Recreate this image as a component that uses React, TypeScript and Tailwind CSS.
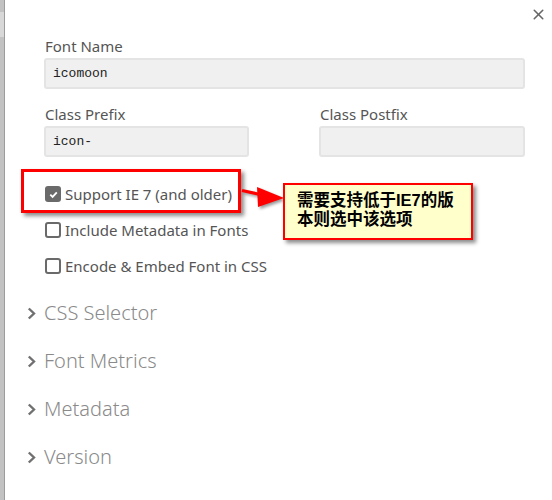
import { X } from "lucide-react";

const options = [
  { label: "Support IE 7 (and older)", checked: true },
  { label: "Include Metadata in Fonts", checked: false },
  { label: "Encode & Embed Font in CSS", checked: false },
];

const sections = ["CSS Selector", "Font Metrics", "Metadata", "Version"];

const Checkbox = ({ checked }: { checked: boolean }) =>
  checked ? (
    <span className="flex h-4 w-4 items-center justify-center rounded-[3px] bg-[#6a6a6a]">
      <svg viewBox="0 0 12 12" className="h-[11px] w-[11px]">
        <path d="M2.5 6.2 L5 8.6 L9.6 3.6" fill="none" stroke="#fff" strokeWidth="2" />
      </svg>
    </span>
  ) : (
    <span className="h-4 w-4 rounded-[3px] border-2 border-[#6a6a6a] bg-white" />
  );

export default function App() {
  return (
    <div className="relative flex h-[500px] w-[552px] overflow-hidden bg-white font-['Noto_Sans',sans-serif]">
      {/* dimmed page behind the dialog */}
      <div className="relative w-[5px] shrink-0 border-r border-[#9c9c9c] bg-[#c2c2c2]">
        <div className="mt-[12px] h-[25px] bg-[#d8d8d8]" />
      </div>

      <button className="absolute right-[5px] top-[6px] text-[#666]">
        <X size={17} strokeWidth={2.2} />
      </button>

      <div className="flex flex-1 flex-col pl-[40px] pr-[27px] pt-[36px]">
        <label className="h-5 text-[15px] leading-5 text-[#555]">Font Name</label>
        <div className="-ml-px mt-[2px] flex h-[31px] items-center rounded-[3px] border-2 border-[#e4e4e4] bg-[#f0f0f0] px-[7px] font-['Liberation_Mono',monospace] text-[13px] text-[#222]">
          icomoon
        </div>

        <div className="-ml-px mt-[15px] flex gap-[70px]">
          <div className="flex w-[205px] flex-col">
            <label className="ml-px h-5 text-[15px] leading-5 text-[#555]">Class Prefix</label>
            <div className="mt-[2px] flex h-[31px] items-center rounded-[3px] border-2 border-[#e4e4e4] bg-[#f0f0f0] px-[7px] font-['Liberation_Mono',monospace] text-[13px] text-[#222]">
              icon-
            </div>
          </div>
          <div className="flex flex-1 flex-col">
            <label className="ml-px h-5 text-[15px] leading-5 text-[#555]">Class Postfix</label>
            <div className="mt-[2px] h-[31px] rounded-[3px] border-2 border-[#e4e4e4] bg-[#f0f0f0]" />
          </div>
        </div>

        <div className="mt-[19px] flex flex-col">
          {options.map((o) => (
            <div key={o.label} className="flex h-9 items-center gap-[4px]">
              <Checkbox checked={o.checked} />
              <span className="text-[15px] text-[#555]">{o.label}</span>
            </div>
          ))}
        </div>

        <div className="-ml-[18px] mt-[5px] flex flex-col">
          {sections.map((s) => (
            <div key={s} className="flex h-12 items-center gap-[8px]">
              <svg width="9" height="13" viewBox="0 0 9 13" className="shrink-0">
                <path d="M1.8 1.5 L7 6.5 L1.8 11.5" fill="none" stroke="#707070" strokeWidth="2.4" />
              </svg>
              <span className="text-[20px] font-light text-[#8a8a8a]">{s}</span>
            </div>
          ))}
        </div>
      </div>

      {/* annotation: red frame, arrow and note */}
      <div className="absolute left-[21px] top-[169px] h-[44px] w-[220px] border-[3px] border-[#ff0000] shadow-[3px_3px_4px_rgba(0,0,0,0.45)]" />
      <svg className="absolute left-[238px] top-[182px]" width="50" height="30" viewBox="0 0 50 30">
        <g style={{ filter: "drop-shadow(2px 2px 1.5px rgba(0,0,0,0.4))" }}>
          <path d="M4 8.5 L22 12.5" stroke="#ff0000" strokeWidth="3.2" fill="none" />
          <path d="M19 5 L46 16 L20 25 Z" fill="#ff0000" />
        </g>
      </svg>
      <div className="absolute left-[283px] top-[183px] h-[57px] w-[190px] border-2 border-[#ff0000] bg-[#ffffcc] pl-[12px] pt-[6px] font-['Liberation_Sans','Noto_Sans_CJK_SC',sans-serif] text-[16.5px] font-bold leading-[19px] text-black shadow-[3px_3px_4px_rgba(0,0,0,0.45)]">
        需要支持低于IE7的版
        <br />
        本则选中该选项
      </div>
    </div>
  );
}
